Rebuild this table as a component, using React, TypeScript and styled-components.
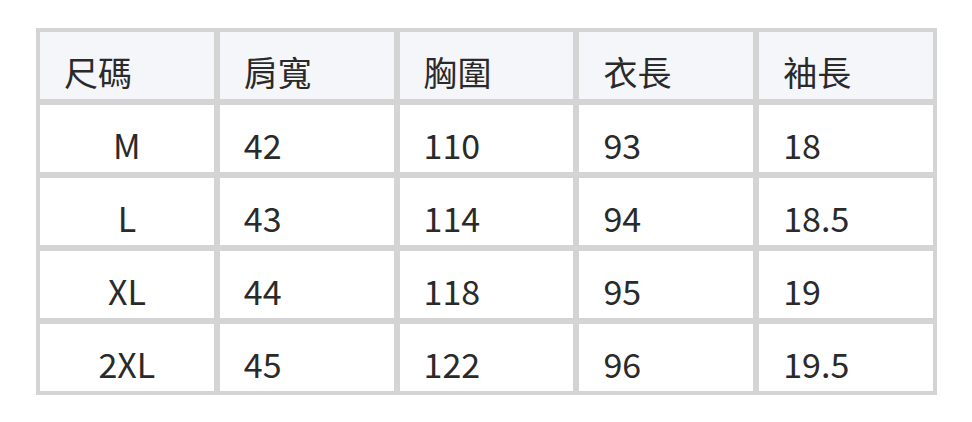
import React from 'react';
import styled, { createGlobalStyle } from 'styled-components';

const GlobalStyle = createGlobalStyle`
  body {
    margin: 0;
    background: #ffffff;
    font-family: "Noto Sans CJK TC", "Noto Sans", sans-serif;
  }
`;

const Page = styled.div`
  padding: 28px 35px 0 36px;
`;

const Table = styled.div`
  width: 901px;
  display: grid;
  grid-template-columns: repeat(5, 1fr);
  grid-auto-rows: 67px;
  gap: 6px;
  padding: 4px;
  box-sizing: border-box;
  background: #d4d4d4;
`;

const Cell = styled.div<{ $head?: boolean; $center?: boolean }>`
  display: flex;
  align-items: flex-end;
  justify-content: ${p => (p.$center ? 'center' : 'flex-start')};
  padding: 0 0 3px ${p => (p.$center ? '0' : '24px')};
  background: ${p => (p.$head ? '#f5f6fa' : '#ffffff')};
  color: #2a2a2a;
  font-size: 34px;
  line-height: 1.45;
`;

const head = ['尺碼', '肩寬', '胸圍', '衣長', '袖長'];

const rows = [
  ['M', '42', '110', '93', '18'],
  ['L', '43', '114', '94', '18.5'],
  ['XL', '44', '118', '95', '19'],
  ['2XL', '45', '122', '96', '19.5'],
];

const App: React.FC = () => {
  return (
    <Page>
      <GlobalStyle />
      <Table>
        {head.map(h => (
          <Cell key={h} $head>{h}</Cell>
        ))}
        {rows.map(row =>
          row.map((value, i) => (
            <Cell key={row[0] + i} $center={i === 0}>{value}</Cell>
          ))
        )}
      </Table>
    </Page>
  );
};

export default App;
